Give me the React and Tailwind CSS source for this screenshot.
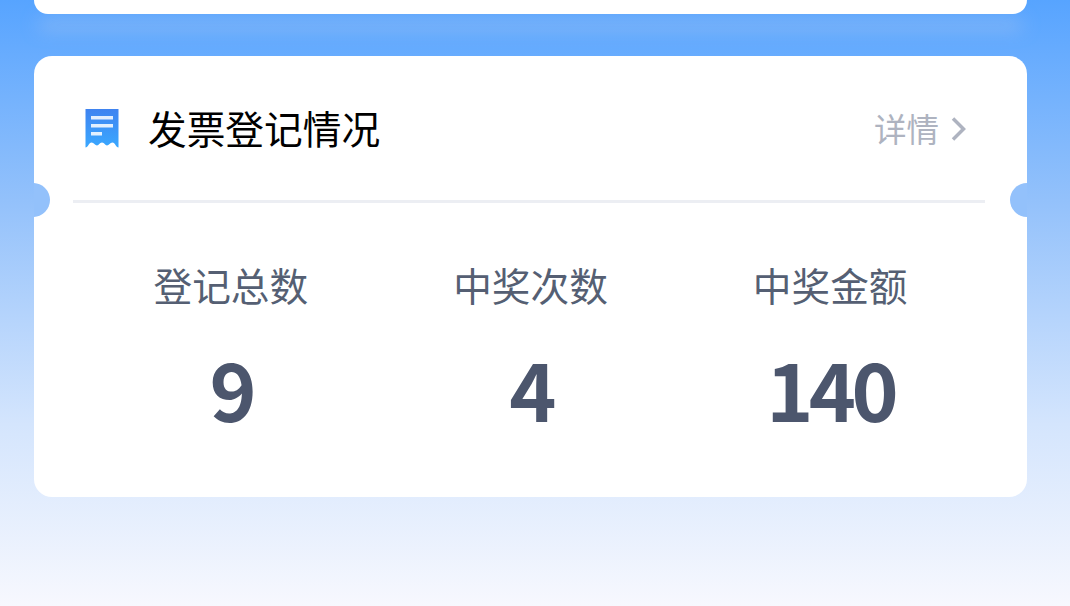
const font = { fontFamily: '"Noto Sans CJK SC", sans-serif' };

function ReceiptIcon() {
  return (
    <svg width="34" height="40" viewBox="0 0 34 40" className="shrink-0">
      <defs>
        <linearGradient id="rg" x1="0" y1="0" x2="0" y2="1">
          <stop offset="0" stopColor="#3f83f0" />
          <stop offset="1" stopColor="#3aa8ff" />
        </linearGradient>
      </defs>
      <path d="M0.500 1H33.500V39.500C31 39.500 30 34.500 27.500 34.500C25 34.500 24 37.500 22 37.500C20 37.500 19.500 34.500 17 34.500C14.500 34.500 14 37.500 12 37.500C10 37.500 9 34.500 6.500 34.500C4 34.500 3 39.500 0.500 39.500Z" fill="url(#rg)" />
      <rect x="6" y="8" width="22" height="3.500" fill="#fff" opacity="0.85" />
      <rect x="6" y="16" width="22" height="3.500" fill="#fff" opacity="0.85" />
      <rect x="6" y="24" width="11" height="3.500" fill="#fff" opacity="0.85" />
    </svg>
  );
}

function Stat({ label, value }) {
  return (
    <div className="flex flex-1 flex-col items-center">
      <div className="text-[38.700px] leading-[56px] text-[#555f73]">{label}</div>
      <div className="mt-[27px] text-[80px] leading-[96px] font-semibold tracking-[-4.500px] text-[#4c566d]">{value}</div>
    </div>
  );
}

export default function App() {
  return (
    <div
      style={font}
      className="flex h-[606px] w-[1070px] flex-col overflow-hidden bg-[linear-gradient(180deg,#57a4ff_0%,#93c1fb_33%,#d4e5fd_70%,#f7f8fe_100%)] pl-[34px] pr-[43px]"
    >
      <div className="h-[14px] shrink-0 rounded-b-[18px] bg-white shadow-[0_18px_18px_-4px_rgba(210,215,230,0.6)]" />
      <div className="relative mt-[42px] flex h-[441px] shrink-0 flex-col overflow-hidden rounded-[18px] bg-white">
        <div className="absolute left-[-18px] top-[127px] h-[34px] w-[34px] rounded-full bg-[#93c1fb]" />
        <div className="absolute right-[-17px] top-[127px] h-[34px] w-[34px] rounded-full bg-[#93c1fb]" />
        <div className="ml-[39px] mr-[42px] flex h-[147px] shrink-0 items-center border-b-[3px] border-[#eceef3] pb-[1px]">
          <div className="ml-[12px] mt-[1px]"><ReceiptIcon /></div>
          <div className="ml-[29px] text-[38.700px] leading-none text-black">发票登记情况</div>
          <div className="ml-auto mr-[17px] mt-[2px] flex items-center text-[32.500px] text-[#aeb3c0]">
            详情
            <svg width="18" height="26" viewBox="0 0 18 26" className="ml-[11px]">
              <path d="M3 2.500L13.500 13L3 23.500" fill="none" stroke="#aeb3c0" strokeWidth="3.500" />
            </svg>
          </div>
        </div>
        <div className="mt-[53px] flex px-[47px]">
          <Stat label="登记总数" value="9" />
          <Stat label="中奖次数" value="4" />
          <Stat label="中奖金额" value="140" />
        </div>
      </div>
    </div>
  );
}
